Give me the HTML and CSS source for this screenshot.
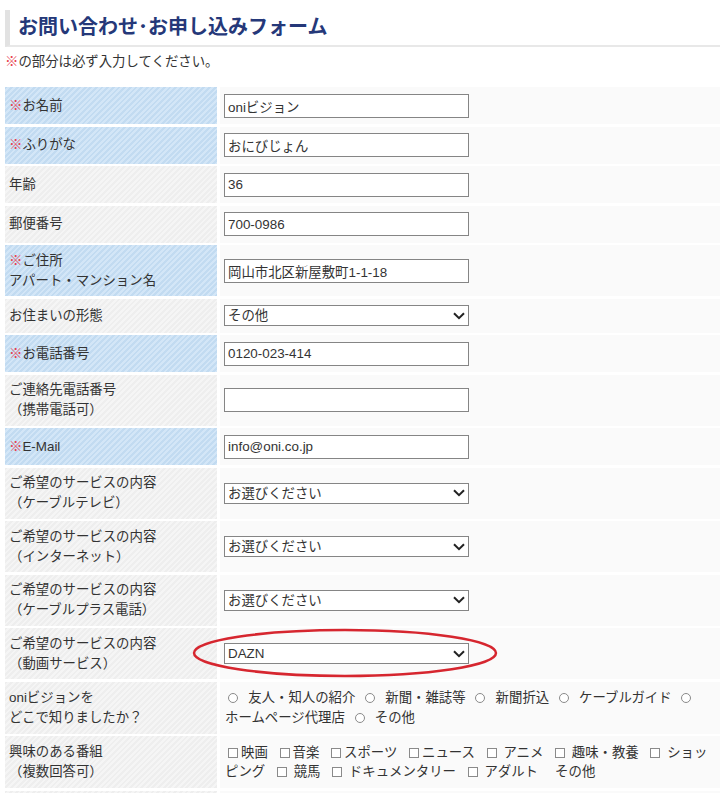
FILE: index.html
```html
<!DOCTYPE html>
<html lang="ja">
<head>
    <meta charset="UTF-8">
    <meta name="viewport" content="width=device-width, initial-scale=1.0">
    <title>お問い合わせ・お申し込みフォーム</title>
    <link rel="stylesheet" href="styles.css">
</head>
<body>
    <div class="page">
        <h2 class="title">お問い合わせ･お申し込みフォーム</h2>
        <p class="note"><span class="req">※</span>の部分は必ず入力してください。</p>

        <form class="form" id="contactForm">
            <div class="label required"><span><span class="req">※</span>お名前</span></div>
            <div class="field"><input type="text" value="oniビジョン"></div>

            <div class="label required"><span><span class="req">※</span>ふりがな</span></div>
            <div class="field"><input type="text" value="おにびじょん"></div>

            <div class="label"><span>年齢</span></div>
            <div class="field"><input type="text" value="36"></div>

            <div class="label"><span>郵便番号</span></div>
            <div class="field"><input type="text" value="700-0986"></div>

            <div class="label required"><span><span class="req">※</span>ご住所<br>アパート・マンション名</span></div>
            <div class="field"><input type="text" value="岡山市北区新屋敷町1-1-18"></div>

            <div class="label"><span>お住まいの形態</span></div>
            <div class="field">
                <select>
                    <option>お選びください</option>
                    <option>持ち家</option>
                    <option>賃貸</option>
                    <option selected>その他</option>
                </select>
            </div>

            <div class="label required"><span><span class="req">※</span>お電話番号</span></div>
            <div class="field"><input type="text" value="0120-023-414"></div>

            <div class="label"><span>ご連絡先電話番号<br>（携帯電話可）</span></div>
            <div class="field"><input type="text" value=""></div>

            <div class="label required"><span><span class="req">※</span>E-Mail</span></div>
            <div class="field"><input type="text" value="info@oni.co.jp"></div>

            <div class="label"><span>ご希望のサービスの内容<br>（ケーブルテレビ）</span></div>
            <div class="field">
                <select><option>お選びください</option></select>
            </div>

            <div class="label"><span>ご希望のサービスの内容<br>（インターネット）</span></div>
            <div class="field">
                <select><option>お選びください</option></select>
            </div>

            <div class="label"><span>ご希望のサービスの内容<br>（ケーブルプラス電話）</span></div>
            <div class="field">
                <select><option>お選びください</option></select>
            </div>

            <div class="label"><span>ご希望のサービスの内容<br>（動画サービス）</span></div>
            <div class="field">
                <select>
                    <option>お選びください</option>
                    <option selected>DAZN</option>
                </select>
                <!-- 注目の赤丸 -->
                <svg class="circle-mark" width="310" height="52" viewBox="0 0 310 52">
                    <ellipse cx="155" cy="26" rx="151" ry="23" fill="none" stroke="#d6262f" stroke-width="2.5"/>
                </svg>
            </div>

            <div class="label"><span>oniビジョンを<br>どこで知りましたか？</span></div>
            <div class="field">
                <div class="choices">
                    <input type="radio" name="source"> 友人・知人の紹介
                    <input type="radio" name="source"> 新聞・雑誌等
                    <input type="radio" name="source"> 新聞折込
                    <input type="radio" name="source"> ケーブルガイド
                    <input type="radio" name="source"> ホームページ代理店
                    <input type="radio" name="source"> その他
                </div>
            </div>

            <div class="label"><span>興味のある番組<br>（複数回答可）</span></div>
            <div class="field">
                <div class="choices">
                    <input type="checkbox">映画
                    <input type="checkbox">音楽
                    <input type="checkbox">スポーツ
                    <input type="checkbox">ニュース
                    <input type="checkbox"> アニメ
                    <input type="checkbox"> 趣味・教養
                    <input type="checkbox"> ショッピング
                    <input type="checkbox"> 競馬
                    <input type="checkbox"> ドキュメンタリー
                    <input type="checkbox"> アダルト
                    　その他
                </div>
            </div>

            <div class="label"></div>
            <div class="field"></div>
        </form>
    </div>
</body>
</html>
```

FILE: styles.css
```css
body {
    font-family: "Liberation Sans", Arial, "Noto Sans CJK JP", sans-serif;
    font-size: 13.4px;
    color: #333;
    background-color: #fff;
    margin: 0;
}

.page {
    padding: 10px 0 0 5px;
}

.title {
    margin: 0;
    height: 35px;
    line-height: 35px;
    padding-left: 8px;
    border-left: 5px solid #e2e2e2;
    border-bottom: 2px solid #e8e8e8;
    color: #253879;
    font-size: 20px;
    font-weight: bold;
}

.note {
    margin: 5px 0 0;
    line-height: 20px;
}

.req {
    color: #e8404c;
}

.form {
    display: grid;
    grid-template-columns: 212px 1fr;
    column-gap: 3px;
    row-gap: 2.5px;
    margin-top: 15px;
}

.label {
    display: flex;
    align-items: center;
    padding: 5.5px 4px;
    line-height: 20px;
    background: repeating-linear-gradient(135deg, #eeeeee 0 2px, #f5f5f5 2px 4px);
}

.label.required {
    background: repeating-linear-gradient(135deg, #c2dbf1 0 2px, #d3e6f7 2px 4px);
}

.field {
    display: flex;
    align-items: center;
    padding: 6.5px 9px 6.5px 4px;
    background-color: #fafafa;
    position: relative;
}

.field input[type="text"] {
    width: 245px;
    height: 24px;
    box-sizing: border-box;
    padding: 0 3px;
    border: 1px solid #858585;
    border-radius: 0;
    font-family: inherit;
    font-size: 13.4px;
    color: #333;
    background: #fff;
}

.field select {
    appearance: none;
    width: 245px;
    height: 21px;
    box-sizing: border-box;
    padding: 0 20px 0 3px;
    border: 1px solid #858585;
    border-radius: 0;
    font-family: inherit;
    font-size: 13.4px;
    color: #333;
    background: #fff url("data:image/svg+xml,%3Csvg xmlns='http://www.w3.org/2000/svg' width='12' height='8' viewBox='0 0 12 8'%3E%3Cpath d='M1 1.2l5 5 5-5' fill='none' stroke='%23222' stroke-width='2'/%3E%3C/svg%3E") no-repeat right 3px center;
}

.choices {
    padding-left: 1px;
    line-height: 19.5px;
}

.choices input {
    appearance: none;
    width: 10px;
    height: 10px;
    margin: 0 3px 0 8px;
    border: 1px solid #8a8a8a;
    background: #fff;
    vertical-align: -1px;
}

.choices input:first-child {
    margin-left: 3px;
}

.choices input[type="radio"] {
    margin: 0 6.5px 0 6px;
    border-radius: 50%;
}

.choices input[type="radio"]:first-child {
    margin-left: 3px;
}

.circle-mark {
    position: absolute;
    left: -30px;
    top: -1px;
    pointer-events: none;
}
```
